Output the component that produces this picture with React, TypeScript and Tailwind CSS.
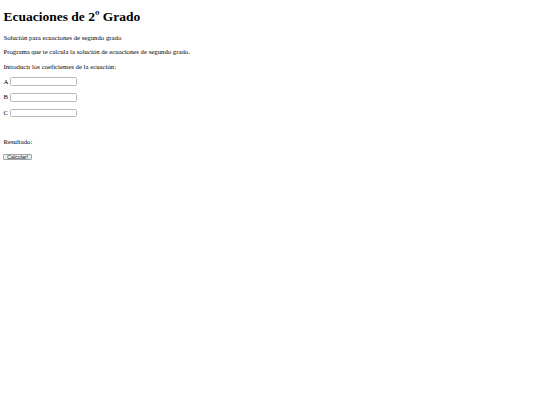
const fields = ['A', 'B', 'C']

export default function App() {
  return (
    <div className="min-h-screen bg-white px-[3.4px] text-[6.75px] leading-[1.15] text-black font-['Liberation_Serif','Times_New_Roman',serif]">
      <h1 className="mt-[9px] mb-[9px] text-[13.5px] font-bold leading-[1.15]">Ecuaciones de 2º Grado</h1>
      <p className="mb-[6.75px]">Solución para ecuaciones de segundo grado</p>
      <p className="mb-[6.75px]">Programa que te calcula la solución de ecuaciones de segundo grado.</p>
      <p className="mb-[6.75px]">Introducir los coeficientes de la ecuación:</p>

      {fields.map((f) => (
        <p key={f} className="mb-[6.75px] flex h-[9px] items-center gap-[1.6px]">
          <span>{f}</span>
          <input
            type="text"
            className="h-[8.6px] w-[67px] rounded-[1.5px] border border-[#b8b8b8] bg-white px-[1px] text-[5.6px] outline-none"
          />
        </p>
      ))}

      {/* empty line before the result */}
      <p className="mb-[6.75px] h-[7px]"></p>
      <p className="mb-[6.75px]">Resultado:</p>
      <p>
        <button
          type="button"
          className="h-[6.6px] rounded-[1px] border border-[#a3a3a3] bg-[#efefef] px-[2.6px] text-[5.4px] leading-none text-[#222] font-['Liberation_Sans',Arial,sans-serif]"
        >
          Calcular!
        </button>
      </p>
    </div>
  )
}
